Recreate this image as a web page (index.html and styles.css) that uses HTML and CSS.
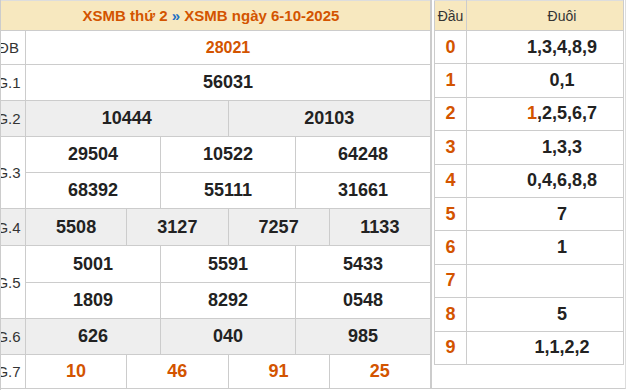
FILE: index.html
```html
<!DOCTYPE html>
<html>
<head>
  <meta charset="UTF-8">
  <title>XSMB thứ 2 - 6-10-2025</title>
  <link rel="stylesheet" href="styles.css">
</head>
<body>

  <div class="wrap">
    <div class="kq-box">
      <table class="kq">
        <colgroup>
          <col class="c-lbl">
          <col><col><col><col><col><col><col><col><col><col><col><col>
        </colgroup>
        <tr class="r-head">
          <th colspan="13"><a>XSMB thứ 2</a> <span class="sep">»</span> <a>XSMB ngày 6-10-2025</a></th>
        </tr>
        <tr class="r-db">
          <td class="lbl">ĐB</td>
          <td colspan="12" class="so db">28021</td>
        </tr>
        <tr class="r36">
          <td class="lbl">G.1</td>
          <td colspan="12" class="so">56031</td>
        </tr>
        <tr class="r36 xam">
          <td class="lbl">G.2</td>
          <td colspan="6" class="so">10444</td>
          <td colspan="6" class="so">20103</td>
        </tr>
        <tr class="r36">
          <td class="lbl" rowspan="2">G.3</td>
          <td colspan="4" class="so">29504</td>
          <td colspan="4" class="so">10522</td>
          <td colspan="4" class="so">64248</td>
        </tr>
        <tr class="r36">
          <td colspan="4" class="so">68392</td>
          <td colspan="4" class="so">55111</td>
          <td colspan="4" class="so">31661</td>
        </tr>
        <tr class="r37 xam">
          <td class="lbl">G.4</td>
          <td colspan="3" class="so">5508</td>
          <td colspan="3" class="so">3127</td>
          <td colspan="3" class="so">7257</td>
          <td colspan="3" class="so">1133</td>
        </tr>
        <tr class="r37">
          <td class="lbl" rowspan="2">G.5</td>
          <td colspan="4" class="so">5001</td>
          <td colspan="4" class="so">5591</td>
          <td colspan="4" class="so">5433</td>
        </tr>
        <tr class="r36">
          <td colspan="4" class="so">1809</td>
          <td colspan="4" class="so">8292</td>
          <td colspan="4" class="so">0548</td>
        </tr>
        <tr class="r36 xam">
          <td class="lbl">G.6</td>
          <td colspan="4" class="so">626</td>
          <td colspan="4" class="so">040</td>
          <td colspan="4" class="so">985</td>
        </tr>
        <tr class="r-g7">
          <td class="lbl">G.7</td>
          <td colspan="3" class="so do">10</td>
          <td colspan="3" class="so do">46</td>
          <td colspan="3" class="so do">91</td>
          <td colspan="3" class="so do">25</td>
        </tr>
      </table>
    </div>

    <div class="loto-box">
      <table class="loto">
        <tr class="l-head">
          <th class="dau">Đầu</th>
          <th class="duoi">Đuôi</th>
        </tr>
        <tr><td class="dau">0</td><td class="duoi">1,3,4,8,9</td></tr>
        <tr><td class="dau">1</td><td class="duoi">0,1</td></tr>
        <tr><td class="dau">2</td><td class="duoi"><span class="do">1</span>,2,5,6,7</td></tr>
        <tr><td class="dau">3</td><td class="duoi">1,3,3</td></tr>
        <tr><td class="dau">4</td><td class="duoi">0,4,6,8,8</td></tr>
        <tr><td class="dau">5</td><td class="duoi">7</td></tr>
        <tr><td class="dau">6</td><td class="duoi">1</td></tr>
        <tr><td class="dau">7</td><td class="duoi"></td></tr>
        <tr><td class="dau">8</td><td class="duoi">5</td></tr>
        <tr><td class="dau">9</td><td class="duoi">1,1,2,2</td></tr>
      </table>
    </div>
  </div>

</body>
</html>
```

FILE: styles.css
```css
html, body { margin: 0; padding: 0; background: #fff; }
body { font-family: "Liberation Sans", Arial, sans-serif; color: #222; }

.wrap { display: flex; width: 627px; height: 390px; overflow: hidden; }

/* bang ket qua */
.kq-box { width: 430px; overflow: hidden; border-left: 1px solid #ccc; flex: none; }
.kq { border-collapse: collapse; table-layout: fixed; width: 440px; margin-left: -10px; }
.kq col.c-lbl { width: 34px; }
.kq th, .kq td { border: 1px solid #ccc; padding: 0; text-align: center; }
.kq tr.r-head th { height: 29px; background: #f7e8bf; border-top-color: #ddd; font-size: 15px; font-weight: bold; }
.kq tr.r-head a { color: #d35400; text-decoration: none; }
.kq .sep { color: #1a6fc4; }
.kq tr.r-db td { height: 33px; }
.kq tr.r36 td { height: 35px; }
.kq tr.r37 td { height: 36px; }
.kq tr.r-g7 td { height: 33px; }
.kq tr.xam td { background: #eee; }
.kq td.lbl { font-size: 15px; color: #333; }
.kq td.so { font-size: 18px; font-weight: bold; color: #222; }
.kq td.db { font-size: 16px; color: #d35400; }
.kq td.do { color: #d35400; }

/* bang loto */
.loto-box { width: 195px; height: 389px; border-right: 1px solid #ddd; border-bottom: 1px solid #ccc; border-left: 1px solid #ccc; padding: 0 1px 0 2px; box-sizing: border-box; flex: none; }
.loto { border-collapse: collapse; table-layout: fixed; width: 100%; }
.loto th, .loto td { border: 1px solid #ccc; padding: 0; text-align: center; height: 32.4px; font-size: 18px; font-weight: bold; color: #222; }
.loto tr.l-head th { height: 29px; background: #f7e8bf; font-size: 14px; font-weight: normal; color: #333; border-top-color: #ddd; }
.loto .dau { width: 31px; }
.loto .duoi { padding-left: 34px; }
.loto td.dau { color: #d35400; }
.loto .do { color: #d35400; }
```
